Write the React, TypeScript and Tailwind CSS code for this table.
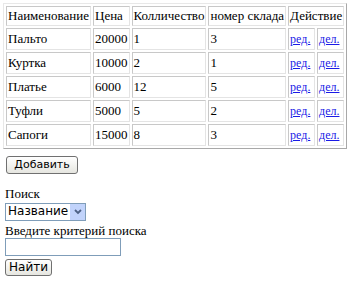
import React from "react";

const items = [
  { name: "Пальто", price: "20000", qty: "1", store: "3" },
  { name: "Куртка", price: "10000", qty: "2", store: "1" },
  { name: "Платье", price: "6000", qty: "12", store: "5" },
  { name: "Туфли", price: "5000", qty: "5", store: "2" },
  { name: "Сапоги", price: "15000", qty: "8", store: "3" },
];

const cell = "border border-[#c8c8c8] border-b-[#e4e4e4] border-r-[#e4e4e4] px-[1px] leading-[16px] whitespace-nowrap";
const serif = "[font-family:'Liberation_Serif',serif]";
const sans = "[font-family:'DejaVu_Sans',sans-serif]";

const App: React.FC = () => {
  return (
    <div className={`bg-white w-[359px] h-[282px] overflow-hidden text-[13px] text-black ${serif} pt-[3px] pl-[3px]`}>
      {/* Items table */}
      <table className={`${serif} border-separate border-spacing-[2px] border border-[#e8e8e8] border-r-[#a8a8a8] border-b-[#a8a8a8] w-[336px]`}>
        <thead>
          <tr>
            <th className={`${cell} py-[1px] font-normal text-left`}>Наименование</th>
            <th className={`${cell} py-[1px] font-normal text-left`}>Цена</th>
            <th className={`${cell} py-[1px] font-normal text-left`}>Колличество</th>
            <th className={`${cell} py-[1px] font-normal text-left`}>номер склада</th>
            <th className={`${cell} py-[1px] font-normal text-left`} colSpan={2}>Действие</th>
          </tr>
        </thead>
        <tbody>
          {items.map((it, i) => (
            <tr key={i}>
              <td className={`${cell} py-[2px] w-[1px]`}>{it.name}</td>
              <td className={`${cell} py-[2px] w-[1px]`}>{it.price}</td>
              <td className={`${cell} py-[2px]`}>{it.qty}</td>
              <td className={`${cell} py-[2px]`}>{it.store}</td>
              <td className={`${cell} py-[2px] text-[12px] w-[1px]`}>
                <a href="#" className="text-[#1a1ae6] underline">ред.</a>
              </td>
              <td className={`${cell} py-[2px] text-[12px] w-[1px]`}>
                <a href="#" className="text-[#1a1ae6] underline">дел.</a>
              </td>
            </tr>
          ))}
        </tbody>
      </table>

      <div className="mt-[5px] ml-[3px]">
        <button className={`w-[72px] h-[18px] rounded-[3px] border border-[#707070] bg-gradient-to-b from-white to-[#e6e6e0] ${sans} text-[11px] leading-none`}>
          Добавить
        </button>
      </div>

      {/* Search form */}
      <div className="mt-[12px] ml-[2px] flex flex-col items-start leading-[15px]">
        <span>Поиск</span>
        <div className={`mt-[2px] flex items-center h-[18px] border border-[#7f9db9] ${sans} text-[12px]`}>
          <span className="px-[2px]">Название</span>
          <span className="w-[15px] h-[16px] bg-[#c1d3fb] flex items-center justify-center">
            <svg width="8" height="6" viewBox="0 0 8 6">
              <path d="M1 1 L4 4 L7 1" stroke="#4d6185" strokeWidth="1.8" fill="none" />
            </svg>
          </span>
        </div>
        <span className="mt-[2px]">Введите критерий поиска</span>
        <input className="w-[116px] h-[18px] border border-[#7f9db9] outline-none" />
        <button className={`mt-[3px] w-[47px] h-[17px] rounded-[3px] border border-[#707070] bg-gradient-to-b from-white to-[#e6e6e0] ${sans} text-[12px] leading-none`}>
          Найти
        </button>
      </div>
    </div>
  );
};

export default App;
